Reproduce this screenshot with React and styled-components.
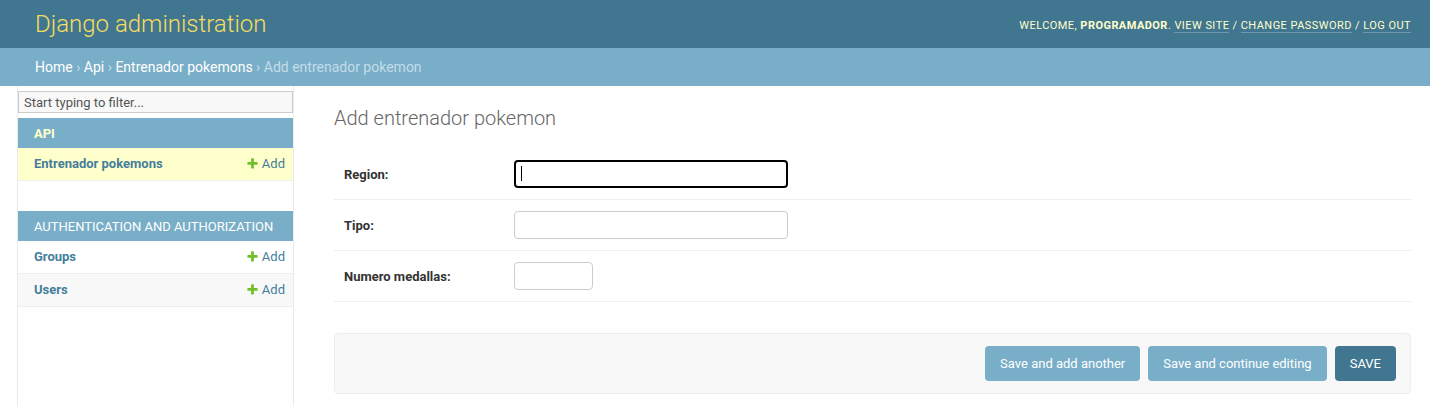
import React from "react";
import styled, { createGlobalStyle } from "styled-components";

const GlobalStyle = createGlobalStyle`
  body {
    margin: 0;
    font-family: Roboto, "Liberation Sans", sans-serif;
    font-size: 14px;
    color: #333;
    background: #fff;
  }
  * { box-sizing: border-box; }
`;

const Header = styled.header`
  height: 48px;
  display: flex;
  align-items: center;
  justify-content: space-between;
  padding: 0 19px 0 35px;
  background: #417690;
`;

const Branding = styled.h1`
  margin: 0;
  font-size: 24px;
  font-weight: 300;
  color: #f5dd5d;
  line-height: 28px;
`;

const UserTools = styled.div`
  font-size: 11px;
  letter-spacing: 0.45px;
  text-transform: uppercase;
  color: #ffc;
  padding-top: 2px;

  strong {
    font-weight: 700;
  }
  a {
    color: #ffc;
    text-decoration: none;
    border-bottom: 1px solid rgba(255, 255, 255, 0.25);
  }
`;

const Breadcrumbs = styled.nav`
  height: 38px;
  display: flex;
  align-items: center;
  padding: 0 35px;
  background: #79aec8;
  color: #c4dce8;
  font-size: 14px;

  a {
    color: #fff;
    text-decoration: none;
  }
`;

const Main = styled.div`
  display: flex;
  min-height: 320px;
`;

const ToggleStrip = styled.div`
  flex: 0 0 18px;
  border-right: 1px solid #eaeaea;
`;

const Sidebar = styled.nav`
  flex: 0 0 276px;
  border-right: 1px solid #eaeaea;
`;

const Filter = styled.input`
  display: block;
  width: 100%;
  height: 22px;
  margin: 5px 0;
  padding: 2px 5px;
  border: 1px solid #ccc;
  background: #f8f8f8;
  font-family: Roboto, "Liberation Sans", sans-serif;
  font-size: 13px;
  color: #333;
  outline: none;

  &::placeholder {
    color: #555;
  }
`;

const Module = styled.div`
  margin-bottom: 30px;
`;

const Caption = styled.div`
  height: 30px;
  display: flex;
  align-items: center;
  padding-left: 16px;
  background: #79aec8;
  font-size: 13px;
  letter-spacing: 0;
  text-transform: uppercase;
  color: ${(p) => (p.$current ? "#ffc" : "#fff")};
  font-weight: ${(p) => (p.$current ? 700 : 400)};
`;

const ModelRow = styled.div`
  height: 33px;
  display: flex;
  align-items: center;
  justify-content: space-between;
  padding: 0 8px 2px 16px;
  border-bottom: 1px solid #eee;
  background: ${(p) => p.$bg || "#fff"};
  font-size: 13px;
  color: #447e9b;
`;

const ModelName = styled.span`
  font-weight: 700;
`;

const AddLink = styled.span`
  display: flex;
  align-items: center;
  gap: 3px;
`;

const Content = styled.main`
  flex: 1;
  padding: 21px 19px 0 40px;
`;

const Title = styled.h1`
  margin: 0 0 19px;
  font-size: 20px;
  font-weight: 300;
  line-height: 23px;
  color: #666;
`;

const FormRow = styled.div`
  display: flex;
  align-items: center;
  padding: 11px 10px;
  border-bottom: 1px solid #eee;
`;

const Label = styled.label`
  flex: 0 0 170px;
  font-size: 13px;
  font-weight: 700;
  color: #333;
`;

const InputWrap = styled.div`
  position: relative;
`;

const TextInput = styled.input`
  display: block;
  width: ${(p) => p.$w}px;
  height: 28px;
  padding: 5px 6px;
  border: ${(p) => (p.$focused ? "2px solid #000" : "1px solid #ccc")};
  border-radius: 4px;
  background: #fff;
  font-family: Roboto, "Liberation Sans", sans-serif;
  font-size: 13px;
  outline: none;
`;

const Caret = styled.span`
  position: absolute;
  left: 7px;
  top: 6px;
  width: 1px;
  height: 15px;
  background: #000;
`;

const SubmitRow = styled.div`
  margin-top: 31px;
  display: flex;
  justify-content: flex-end;
  gap: 8px;
  padding: 12px 14px;
  background: #f8f8f8;
  border: 1px solid #eee;
  border-radius: 4px;
`;

const Button = styled.button`
  height: 35px;
  padding: 0 15px;
  border: none;
  border-radius: 4px;
  background: ${(p) => (p.$primary ? "#417690" : "#79aec8")};
  color: #fff;
  font-family: Roboto, "Liberation Sans", sans-serif;
  font-size: 13px;
  cursor: pointer;
`;

const PlusIcon = () => (
  <svg width="13" height="13" viewBox="0 0 1792 1792">
    <path
      fill="#70bf2b"
      d="M1600 796v192q0 40-28 68t-68 28h-416v416q0 40-28 68t-68 28h-192q-40 0-68-28t-28-68v-416h-416q-40 0-68-28t-28-68v-192q0-40 28-68t68-28h416v-416q0-40 28-68t68-28h192q40 0 68 28t28 68v416h416q40 0 68 28t28 68z"
    />
  </svg>
);

const apps = [
  {
    name: "Api",
    current: true,
    models: [{ name: "Entrenador pokemons", bg: "#ffc" }],
  },
  {
    name: "Authentication and Authorization",
    models: [{ name: "Groups" }, { name: "Users", bg: "#f8f8f8" }],
  },
];

const fields = [
  { label: "Region:", w: 274, focused: true },
  { label: "Tipo:", w: 274 },
  { label: "Numero medallas:", w: 79 },
];

export default function App() {
  return (
    <>
      <GlobalStyle />
      <Header>
        <Branding>Django administration</Branding>
        <UserTools>
          Welcome, <strong>programador</strong>. <a href="#">View site</a> /{" "}
          <a href="#">Change password</a> / <a href="#">Log out</a>
        </UserTools>
      </Header>
      <Breadcrumbs>
        <a href="#">Home</a>&nbsp;›&nbsp;<a href="#">Api</a>&nbsp;›&nbsp;
        <a href="#">Entrenador pokemons</a>&nbsp;›&nbsp;Add entrenador pokemon
      </Breadcrumbs>
      <Main>
        <ToggleStrip />
        <Sidebar>
          <Filter placeholder="Start typing to filter..." />
          {apps.map((app) => (
            <Module key={app.name}>
              <Caption $current={app.current}>{app.name}</Caption>
              {app.models.map((m) => (
                <ModelRow key={m.name} $bg={m.bg}>
                  <ModelName>{m.name}</ModelName>
                  <AddLink>
                    <PlusIcon />
                    Add
                  </AddLink>
                </ModelRow>
              ))}
            </Module>
          ))}
        </Sidebar>
        <Content>
          <Title>Add entrenador pokemon</Title>
          {fields.map((f) => (
            <FormRow key={f.label}>
              <Label>{f.label}</Label>
              <InputWrap>
                <TextInput type="text" $w={f.w} $focused={f.focused} />
                {f.focused && <Caret />}
              </InputWrap>
            </FormRow>
          ))}
          <SubmitRow>
            <Button>Save and add another</Button>
            <Button>Save and continue editing</Button>
            <Button $primary>SAVE</Button>
          </SubmitRow>
        </Content>
      </Main>
    </>
  );
}
